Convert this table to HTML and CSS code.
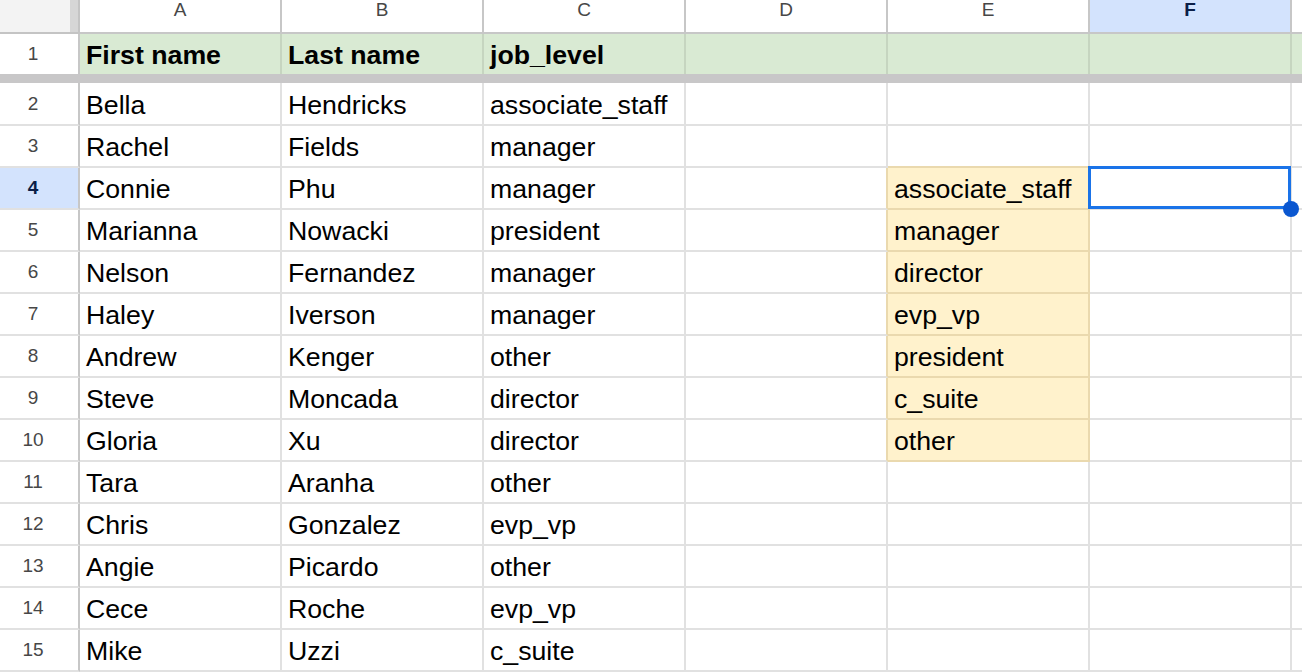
FILE: index.html
```html
<!DOCTYPE html>
<html>
<head>
<meta charset="utf-8">
<link rel="stylesheet" href="styles.css">
</head>
<body>
<div class="sheet">
  <div class="corner"></div>
  <div class="ch">A</div><div class="ch">B</div><div class="ch">C</div><div class="ch">D</div><div class="ch">E</div><div class="ch ch-sel">F</div><div class="ch ch-last"></div>

  <div class="rh rh-frozen">1</div>
  <div class="c hdr">First name</div><div class="c hdr">Last name</div><div class="c hdr">job_level</div><div class="c hdr"></div><div class="c hdr"></div><div class="c hdr"></div><div class="c hdr last"></div>

  <div class="freeze"></div>

  <div class="rh">2</div>
  <div class="c">Bella</div><div class="c">Hendricks</div><div class="c">associate_staff</div><div class="c"></div><div class="c"></div><div class="c"></div><div class="c last"></div>

  <div class="rh">3</div>
  <div class="c">Rachel</div><div class="c">Fields</div><div class="c">manager</div><div class="c"></div><div class="c above-y"></div><div class="c"></div><div class="c last"></div>

  <div class="rh rh-sel">4</div>
  <div class="c">Connie</div><div class="c">Phu</div><div class="c">manager</div><div class="c left-y"></div><div class="c y">associate_staff</div><div class="c sel"><span class="handle"></span></div><div class="c last"></div>

  <div class="rh">5</div>
  <div class="c">Marianna</div><div class="c">Nowacki</div><div class="c">president</div><div class="c left-y"></div><div class="c y">manager</div><div class="c"></div><div class="c last"></div>

  <div class="rh">6</div>
  <div class="c">Nelson</div><div class="c">Fernandez</div><div class="c">manager</div><div class="c left-y"></div><div class="c y">director</div><div class="c"></div><div class="c last"></div>

  <div class="rh">7</div>
  <div class="c">Haley</div><div class="c">Iverson</div><div class="c">manager</div><div class="c left-y"></div><div class="c y">evp_vp</div><div class="c"></div><div class="c last"></div>

  <div class="rh">8</div>
  <div class="c">Andrew</div><div class="c">Kenger</div><div class="c">other</div><div class="c left-y"></div><div class="c y">president</div><div class="c"></div><div class="c last"></div>

  <div class="rh">9</div>
  <div class="c">Steve</div><div class="c">Moncada</div><div class="c">director</div><div class="c left-y"></div><div class="c y">c_suite</div><div class="c"></div><div class="c last"></div>

  <div class="rh">10</div>
  <div class="c">Gloria</div><div class="c">Xu</div><div class="c">director</div><div class="c left-y"></div><div class="c y">other</div><div class="c"></div><div class="c last"></div>

  <div class="rh">11</div>
  <div class="c">Tara</div><div class="c">Aranha</div><div class="c">other</div><div class="c"></div><div class="c"></div><div class="c"></div><div class="c last"></div>

  <div class="rh">12</div>
  <div class="c">Chris</div><div class="c">Gonzalez</div><div class="c">evp_vp</div><div class="c"></div><div class="c"></div><div class="c"></div><div class="c last"></div>

  <div class="rh">13</div>
  <div class="c">Angie</div><div class="c">Picardo</div><div class="c">other</div><div class="c"></div><div class="c"></div><div class="c"></div><div class="c last"></div>

  <div class="rh">14</div>
  <div class="c">Cece</div><div class="c">Roche</div><div class="c">evp_vp</div><div class="c"></div><div class="c"></div><div class="c"></div><div class="c last"></div>

  <div class="rh">15</div>
  <div class="c">Mike</div><div class="c">Uzzi</div><div class="c">c_suite</div><div class="c"></div><div class="c"></div><div class="c"></div><div class="c last"></div>
</div>
</body>
</html>
```

FILE: styles.css
```css
html, body {
  margin: 0;
  padding: 0;
  background: #ffffff;
  overflow: hidden;
}

body {
  font-family: "Liberation Sans", Arial, sans-serif;
  color: #000000;
}

.sheet {
  display: grid;
  grid-template-columns: 80px repeat(6, 202px) 1fr;
  grid-template-rows: 34px 40px 9px 43px repeat(13, 42px);
  width: 1302px;
  height: 672px;
}

.corner {
  box-sizing: border-box;
  background: #f3f3f3;
  border-right: 2px solid #c4c4c4;
  border-bottom: 2px solid #c4c4c4;
  box-shadow: inset -8px 0 0 #d6d6d6;
}

.ch {
  box-sizing: border-box;
  border-right: 2px solid #c7c7c7;
  border-bottom: 2px solid #c7c7c7;
  background: #ffffff;
  color: #474747;
  font-size: 19px;
  line-height: 20px;
  text-align: center;
}

.ch-sel {
  background: #d3e3fd;
  color: #0b1e47;
  font-weight: bold;
}

.ch-last {
  border-right: none;
}

.rh {
  box-sizing: border-box;
  border-right: 2px solid #c7c7c7;
  border-bottom: 2px solid #e1e1e1;
  color: #474747;
  font-size: 19px;
  display: flex;
  align-items: center;
  justify-content: center;
  padding-right: 12px;
}

.rh-frozen {
  border-bottom: none;
}

.rh-sel {
  background: #d3e3fd;
  color: #0b1e47;
  font-weight: bold;
}

.c {
  box-sizing: border-box;
  border-right: 2px solid #e1e1e1;
  border-bottom: 2px solid #e1e1e1;
  display: flex;
  align-items: flex-end;
  padding: 0 6px 4px 6px;
  font-size: 26.7px;
  line-height: 30px;
  white-space: nowrap;
  overflow: hidden;
}

.c.last {
  border-right: none;
}

.c.hdr {
  background: #d9ead3;
  border-bottom: none;
  border-right-color: #c6d5c0;
  font-weight: bold;
  padding-bottom: 4px;
}

.freeze {
  grid-column: 1 / -1;
  background: #c8c7c8;
}

.c.y {
  background: #fff2cc;
  border-right-color: #ead9ae;
  border-bottom-color: #ead9ae;
}

.c.left-y {
  border-right-color: #ead9ae;
}

.c.above-y {
  border-bottom-color: #ead9ae;
}

.c.sel {
  position: relative;
  overflow: visible;
}

.c.sel::after {
  content: "";
  position: absolute;
  left: -2px;
  top: -2px;
  width: 203px;
  height: 43px;
  box-sizing: border-box;
  border: 3px solid #1a73e8;
}

.handle {
  position: absolute;
  left: 193px;
  top: 33px;
  width: 16px;
  height: 16px;
  border-radius: 50%;
  background: #0b57d0;
  z-index: 2;
}
```
